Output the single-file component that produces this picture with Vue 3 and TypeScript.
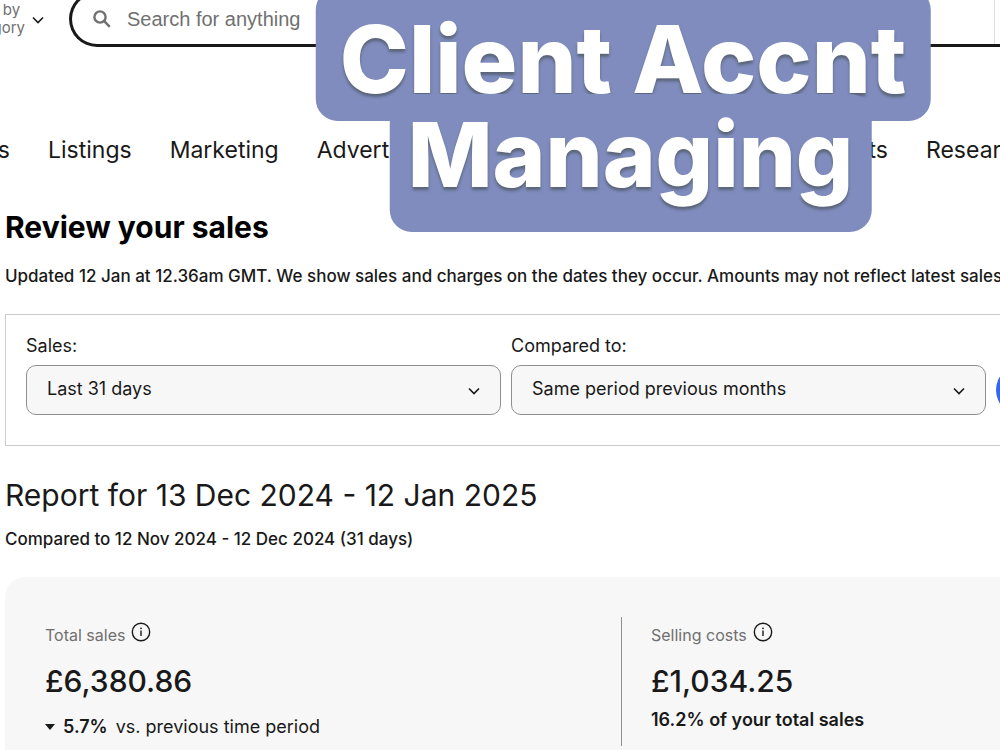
<script setup lang="ts">
import { ref } from 'vue'

interface Filter {
  id: string
  label: string
  options: string[]
}

interface Stat {
  label: string
  value: string
  change?: string
  note: string
}

const query = ref('')

const leadingLinks: string[] = ['Orders', 'Listings', 'Marketing', 'Advertising']
const trailingLinks: string[] = ['Payments', 'Research']

const filters: Filter[] = [
  { id: 'sales-period', label: 'Sales:', options: ['Last 31 days', 'Last 7 days', 'Last 90 days'] },
  { id: 'compare-period', label: 'Compared to:', options: ['Same period previous months', 'Same period last year'] },
]

const selected = ref<string[]>(filters.map((f) => f.options[0]))

const stats: Stat[] = [
  { label: 'Total sales', value: '£6,380.86', change: '5.7%', note: 'vs. previous time period' },
  { label: 'Selling costs', value: '£1,034.25', note: '16.2% of your total sales' },
]
</script>

<template>
  <div class="page">
    <header class="topbar">
      <button class="category" type="button">
        <span class="category-text">Shop by<br />category</span>
      </button>
      <svg class="category-arrow" viewBox="0 0 12 8" aria-hidden="true"><path d="M1 1.5l5 5 5-5" /></svg>
      <form class="search" role="search" @submit.prevent>
        <svg class="search-icon" viewBox="0 0 18 18" aria-hidden="true">
          <circle cx="7" cy="7" r="5.6" />
          <path d="M11.2 11.2l5.6 5.6" />
        </svg>
        <input v-model="query" type="search" placeholder="Search for anything" aria-label="Search for anything" />
        <span class="search-divider"></span>
      </form>
    </header>

    <nav class="nav">
      <div class="links">
        <a v-for="link in leadingLinks" :key="link" href="#"><span>{{ link }}</span></a>
      </div>
      <div class="links trailing">
        <a v-for="link in trailingLinks" :key="link" href="#">{{ link }}</a>
      </div>
    </nav>

    <main class="main">
      <h1 class="title">Review your sales</h1>
      <p class="updated">
        Updated 12 Jan at 12.36am GMT. We show sales and charges on the dates they occur. Amounts may not reflect latest sales.
      </p>

      <form class="filters" @submit.prevent>
        <div v-for="(filter, i) in filters" :key="filter.id" class="field">
          <label :for="filter.id">{{ filter.label }}</label>
          <div class="select">
            <select :id="filter.id" v-model="selected[i]">
              <option v-for="option in filter.options" :key="option">{{ option }}</option>
            </select>
            <svg viewBox="0 0 12 8" aria-hidden="true"><path d="M1 1.5l5 5 5-5" /></svg>
          </div>
        </div>
        <button class="apply" type="submit" aria-label="Apply"></button>
      </form>

      <h2 class="report">Report for 13 Dec 2024 - 12 Jan 2025</h2>
      <p class="compared">Compared to 12 Nov 2024 - 12 Dec 2024 (31 days)</p>

      <section class="stats">
        <article v-for="stat in stats" :key="stat.label" class="stat">
          <div class="stat-label">
            <span>{{ stat.label }}</span>
            <button class="info" type="button" :aria-label="`About ${stat.label}`">
              <svg viewBox="0 0 20 20" aria-hidden="true">
                <circle class="ring" cx="10" cy="10" r="8.7" />
                <circle cx="10" cy="6.3" r="0.9" />
                <path d="M10 8.6v5.4" />
              </svg>
            </button>
          </div>
          <p class="value">{{ stat.value }}</p>
          <p v-if="stat.change" class="change">
            <svg viewBox="0 0 10 6" aria-hidden="true"><path d="M0 0h10L5 6z" /></svg>
            <strong>{{ stat.change }}</strong>
            <span>{{ stat.note }}</span>
          </p>
          <p v-else class="share">{{ stat.note }}</p>
        </article>
      </section>
    </main>

    <div class="banner">
      <span class="banner-line">Client Accnt</span>
      <span class="banner-line second">Managing</span>
    </div>
  </div>
</template>

<style>
body {
  margin: 0;
  background: #fff;
}
</style>

<style scoped>
.page {
  position: relative;
  min-height: 100vh;
  overflow: hidden;
  color: #191919;
  font-family: Inter, "Liberation Sans", sans-serif;
  font-size: 18px;
  line-height: 24px;
}

.page *,
.page *::before {
  box-sizing: border-box;
}

button,
input,
select {
  margin: 0;
  padding: 0;
  border: 0;
  background: none;
  color: inherit;
  font: inherit;
}

h1,
h2,
p {
  margin: 0;
  white-space: nowrap;
}

a {
  color: inherit;
  text-decoration: none;
}

.topbar {
  display: flex;
  align-items: flex-end;
  height: 47px;
  overflow: hidden;
}

.category {
  display: flex;
  flex: none;
  justify-content: flex-end;
  width: 25px;
  margin-bottom: 10px;
  color: #707070;
  font-size: 15px;
  line-height: 18px;
  text-align: left;
}

.category-arrow {
  flex: none;
  width: 12px;
  height: 8px;
  margin: 0 25px 23px 7px;
}

.category-arrow path,
.select path {
  fill: none;
  stroke: #191919;
  stroke-width: 1.6;
}

.search {
  display: flex;
  flex: 1;
  align-items: center;
  height: 56px;
  border: 3px solid #191919;
  border-right: 0;
  border-radius: 28px 0 0 28px;
}

.search-icon {
  width: 18px;
  height: 18px;
  margin: 0 16px 0 21px;
  fill: none;
  stroke: #707070;
  stroke-width: 2.4;
}

.search input {
  flex: 1;
  min-width: 0;
  outline: 0;
  font-family: "Liberation Sans", Arial, sans-serif;
  font-size: 20px;
}

.search input::placeholder {
  color: #707070;
  opacity: 1;
}

.search-divider {
  align-self: stretch;
  width: 6px;
  border-left: 1px solid #ddd;
}

.nav {
  display: flex;
  justify-content: space-between;
  padding-top: 88px;
  font-size: 23px;
  line-height: 30px;
}

.links {
  display: flex;
  gap: 38px;
}

.links:first-child a:first-child {
  display: flex;
  justify-content: flex-end;
  width: 10px;
}

.trailing a:last-child {
  width: 74px;
}

.main {
  padding: 44px 0 0 5px;
}

.title {
  color: #000;
  font-size: 30px;
  font-weight: 700;
  line-height: 36px;
}

.updated,
.compared {
  font-size: 17px;
  font-weight: 500;
}

.updated {
  margin-top: 19px;
}

.filters {
  display: grid;
  grid-template-columns: 1fr 1fr 4px;
  gap: 10px;
  margin-top: 26px;
  padding: 19px 0 30px 20px;
  border: 1px solid #ccc;
  border-right: 0;
}

.field {
  display: flex;
  flex-direction: column;
  gap: 7px;
}

.select {
  position: relative;
}

.select select {
  display: block;
  width: 100%;
  height: 50px;
  padding: 0 40px 2px 20px;
  border: 1px solid #8f8f8f;
  border-radius: 10px;
  background: #f7f7f7;
  appearance: none;
}

.select svg {
  position: absolute;
  top: 22px;
  right: 21px;
  width: 12px;
  height: 8px;
  pointer-events: none;
}

.apply {
  align-self: end;
  width: 140px;
  height: 50px;
  border-radius: 25px;
  background: #3665f3;
}

.report {
  margin-top: 31px;
  font-size: 30px;
  font-weight: 400;
  line-height: 36px;
}

.compared {
  margin-top: 14px;
}

.stats {
  display: grid;
  grid-template-columns: 576fr 379fr;
  margin-top: 26px;
  padding: 40px 0 40px 40px;
  border-radius: 20px 0 0 20px;
  background: #f7f7f7;
}

.stat {
  min-height: 129px;
}

.stat + .stat {
  padding-left: 29px;
  border-left: 1px solid #8f8f8f;
}

.stat-label {
  display: flex;
  align-items: flex-end;
  gap: 6px;
  height: 30px;
  color: #707070;
  font-size: 16px;
}

.info {
  width: 20px;
  height: 20px;
  margin-bottom: 5px;
}

.info svg {
  display: block;
  fill: #191919;
  stroke: #191919;
  stroke-width: 1.4;
}

.info circle:not(.ring) {
  stroke: none;
}

.info .ring {
  fill: none;
}

.value {
  margin-top: 16px;
  font-size: 30px;
  font-weight: 500;
  line-height: 36px;
}

.change {
  display: flex;
  align-items: center;
  gap: 8px;
  margin-top: 16px;
}

.change svg {
  width: 10px;
  height: 6px;
  fill: #191919;
}

.change strong,
.share {
  font-weight: 600;
}

.share {
  margin-top: 9px;
}

.banner {
  position: absolute;
  top: -12px;
  left: 50%;
  display: flex;
  flex-direction: column;
  align-items: center;
  margin-left: 123px;
  color: #fff;
  font-family: Inter, "Open Sans", sans-serif;
  font-weight: 800;
  text-shadow: 0 3px 3px #5a6478;
  white-space: nowrap;
  transform: translateX(-50%);
}

.banner-line {
  height: 133px;
  padding: 0 24px;
  border-radius: 22px;
  background: #7f8cbd;
  font-size: 93px;
  line-height: 142px;
}

.banner-line.second {
  height: 138px;
  margin: -27px 0 0 15px;
  padding: 0 18px;
  font-size: 90px;
  line-height: 122px;
}
</style>
